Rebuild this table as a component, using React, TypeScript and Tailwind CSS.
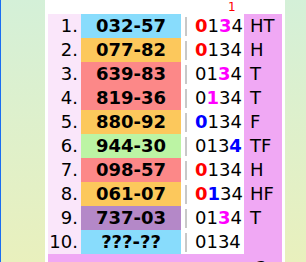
type Digit = { ch: string; color?: string };

const rows: { n: string; pair: string; bg: string; digits: Digit[]; tag: string }[] = [
  { n: "1.", pair: "032-57", bg: "bg-[#88dcfc]", digits: [{ ch: "0", color: "text-[#ff0000]" }, { ch: "1" }, { ch: "3", color: "text-[#ff00ff]" }, { ch: "4" }], tag: "HT" },
  { n: "2.", pair: "077-82", bg: "bg-[#fcc85c]", digits: [{ ch: "0", color: "text-[#ff0000]" }, { ch: "1" }, { ch: "3" }, { ch: "4" }], tag: "H" },
  { n: "3.", pair: "639-83", bg: "bg-[#fc8888]", digits: [{ ch: "0" }, { ch: "1" }, { ch: "3", color: "text-[#ff00ff]" }, { ch: "4" }], tag: "T" },
  { n: "4.", pair: "819-36", bg: "bg-[#fc8888]", digits: [{ ch: "0" }, { ch: "1", color: "text-[#ff00ff]" }, { ch: "3" }, { ch: "4" }], tag: "T" },
  { n: "5.", pair: "880-92", bg: "bg-[#fcc85c]", digits: [{ ch: "0", color: "text-[#0000ff]" }, { ch: "1" }, { ch: "3" }, { ch: "4" }], tag: "F" },
  { n: "6.", pair: "944-30", bg: "bg-[#bcf4a4]", digits: [{ ch: "0" }, { ch: "1" }, { ch: "3" }, { ch: "4", color: "text-[#0000ff]" }], tag: "TF" },
  { n: "7.", pair: "098-57", bg: "bg-[#fc8888]", digits: [{ ch: "0", color: "text-[#ff0000]" }, { ch: "1" }, { ch: "3" }, { ch: "4" }], tag: "H" },
  { n: "8.", pair: "061-07", bg: "bg-[#fcc85c]", digits: [{ ch: "0", color: "text-[#ff0000]" }, { ch: "1", color: "text-[#0000ff]" }, { ch: "3" }, { ch: "4" }], tag: "HF" },
  { n: "9.", pair: "737-03", bg: "bg-[#b488c8]", digits: [{ ch: "0" }, { ch: "1" }, { ch: "3", color: "text-[#ff00ff]" }, { ch: "4" }], tag: "T" },
  { n: "10.", pair: "???-??", bg: "bg-[#88dcfc]", digits: [{ ch: "0" }, { ch: "1" }, { ch: "3" }, { ch: "4" }], tag: "" },
];

export default function App() {
  return (
    <div className="w-[306px] h-[262px] overflow-hidden flex bg-white text-black font-['DejaVu_Sans','Liberation_Sans',sans-serif]">
      {/* left side panel */}
      <div className="w-px bg-[#1a6ef2]" />
      <div className="w-[44px] bg-gradient-to-b from-[#d4f0d8] to-[#e9f0bd]" />
      <div className="w-[3px]" />

      {/* results table */}
      <div className="w-[234px] flex flex-col">
        <div className="h-[15px] grid grid-cols-[33px_100px_63px_38px]">
          <div />
          <div />
          <div className="pl-[47px] text-[12px] leading-[14px] text-[#ff0000]">1</div>
          <div />
        </div>

        {rows.map((r) => (
          <div key={r.n} className="h-[24px] grid grid-cols-[33px_100px_63px_38px] text-[18px] leading-[24px]">
            <div className="bg-[#fae6fa] text-right pr-[3px]">{r.n}</div>
            <div className={`${r.bg} text-center font-bold`}>{r.pair}</div>
            <div className="bg-white flex items-center pl-[4px]">
              <div className="w-[2px] h-[19px] bg-[#c8c8c8]" />
              <div className="pl-[8px]">
                {r.digits.map((d, i) => (
                  <span key={i} className={d.color ? `${d.color} font-bold` : ""}>
                    {d.ch}
                  </span>
                ))}
              </div>
            </div>
            <div className="bg-[#f0a8f4] pl-[6px]">{r.tag}</div>
          </div>
        ))}

        <div className="h-[24px] grid grid-cols-[33px_100px_63px_38px] bg-[#f0a8f4] text-[18px] leading-[24px]">
          <div />
          <div />
          <div />
          <div className="pl-[12px] pt-[2px]">2</div>
        </div>
      </div>

      {/* right side panel */}
      <div className="w-[3px]" />
      <div className="flex-1 bg-gradient-to-b from-[#d4f0d8] to-[#e9f0bd]" />
    </div>
  );
}
